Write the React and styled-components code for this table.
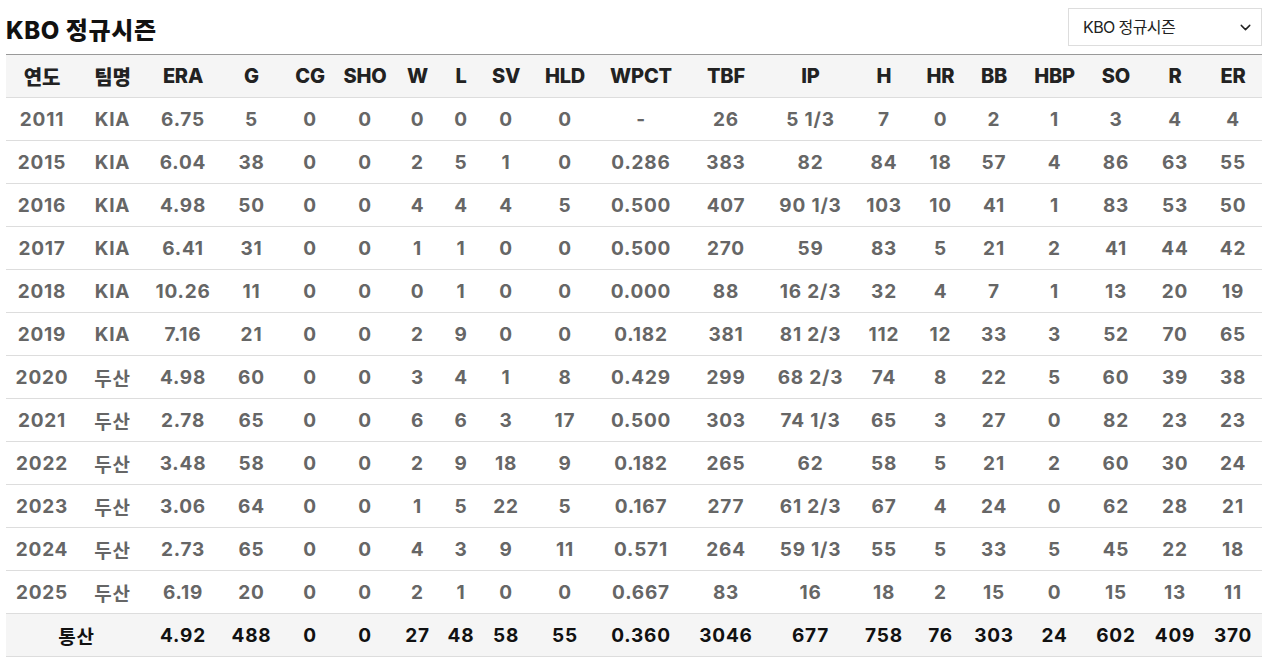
import React from 'react'
import styled, { createGlobalStyle } from 'styled-components'
import { ChevronDown } from 'lucide-react'

const GlobalStyle = createGlobalStyle`
  body {
    margin: 0;
    background: #fff;
    font-family: Inter, "Noto Sans CJK KR", sans-serif;
  }
`

const Page = styled.div`
  padding: 0 7px 0 6px;
`

const Header = styled.div`
  display: flex;
  align-items: center;
  justify-content: space-between;
  height: 54px;
`

const Title = styled.h2`
  margin: 0;
  font-size: 24px;
  font-weight: 800;
  color: #111;
  letter-spacing: 0.6px;
  padding-top: 2px;
`

const SelectWrap = styled.div`
  position: relative;
  width: 194px;
  height: 38px;
  margin-top: -1px;
`

const Select = styled.select`
  appearance: none;
  width: 100%;
  height: 100%;
  border: 1px solid #ddd;
  background: #fff;
  padding: 0 14px;
  font-family: Inter, "Noto Sans CJK KR", sans-serif;
  font-size: 16px;
  color: #222;
  letter-spacing: -0.6px;
  outline: none;
`

const Chevron = styled(ChevronDown)`
  position: absolute;
  right: 8px;
  top: 11px;
  pointer-events: none;
  color: #222;
`

const Table = styled.table`
  width: 100%;
  table-layout: fixed;
  border-collapse: collapse;
  border-top: 1px solid #999;
`

const HeadCell = styled.th`
  height: 42px;
  padding: 0;
  background: #f5f5f5;
  border-bottom: 1px solid #ddd;
  font-size: 20px;
  font-weight: 800;
  color: #222;
  text-align: center;
  letter-spacing: -0.2px;
`

const Cell = styled.td`
  height: 42px;
  padding: 0;
  border-bottom: 1px solid #ddd;
  font-size: 19px;
  font-weight: 700;
  color: ${p => (p.$total ? '#111' : '#666')};
  background: ${p => (p.$total ? '#f5f5f5' : '#fff')};
  text-align: center;
  letter-spacing: 0.8px;
`

const widths = [72, 69, 72, 65, 52, 58, 47, 40, 50, 68, 84, 86, 83, 64, 49, 58, 63, 60, 58, 58]
const heads = ['연도', '팀명', 'ERA', 'G', 'CG', 'SHO', 'W', 'L', 'SV', 'HLD', 'WPCT', 'TBF', 'IP', 'H', 'HR', 'BB', 'HBP', 'SO', 'R', 'ER']

const rows = [
  ['2011', 'KIA', '6.75', '5', '0', '0', '0', '0', '0', '0', '-', '26', '5 1/3', '7', '0', '2', '1', '3', '4', '4'],
  ['2015', 'KIA', '6.04', '38', '0', '0', '2', '5', '1', '0', '0.286', '383', '82', '84', '18', '57', '4', '86', '63', '55'],
  ['2016', 'KIA', '4.98', '50', '0', '0', '4', '4', '4', '5', '0.500', '407', '90 1/3', '103', '10', '41', '1', '83', '53', '50'],
  ['2017', 'KIA', '6.41', '31', '0', '0', '1', '1', '0', '0', '0.500', '270', '59', '83', '5', '21', '2', '41', '44', '42'],
  ['2018', 'KIA', '10.26', '11', '0', '0', '0', '1', '0', '0', '0.000', '88', '16 2/3', '32', '4', '7', '1', '13', '20', '19'],
  ['2019', 'KIA', '7.16', '21', '0', '0', '2', '9', '0', '0', '0.182', '381', '81 2/3', '112', '12', '33', '3', '52', '70', '65'],
  ['2020', '두산', '4.98', '60', '0', '0', '3', '4', '1', '8', '0.429', '299', '68 2/3', '74', '8', '22', '5', '60', '39', '38'],
  ['2021', '두산', '2.78', '65', '0', '0', '6', '6', '3', '17', '0.500', '303', '74 1/3', '65', '3', '27', '0', '82', '23', '23'],
  ['2022', '두산', '3.48', '58', '0', '0', '2', '9', '18', '9', '0.182', '265', '62', '58', '5', '21', '2', '60', '30', '24'],
  ['2023', '두산', '3.06', '64', '0', '0', '1', '5', '22', '5', '0.167', '277', '61 2/3', '67', '4', '24', '0', '62', '28', '21'],
  ['2024', '두산', '2.73', '65', '0', '0', '4', '3', '9', '11', '0.571', '264', '59 1/3', '55', '5', '33', '5', '45', '22', '18'],
  ['2025', '두산', '6.19', '20', '0', '0', '2', '1', '0', '0', '0.667', '83', '16', '18', '2', '15', '0', '15', '13', '11'],
]

const total = ['4.92', '488', '0', '0', '27', '48', '58', '55', '0.360', '3046', '677', '758', '76', '303', '24', '602', '409', '370']

export default function App() {
  return (
    <Page>
      <GlobalStyle />
      <Header>
        <Title>KBO 정규시즌</Title>
        <SelectWrap>
          <Select defaultValue="regular">
            <option value="regular">KBO 정규시즌</option>
            <option value="post">KBO 포스트시즌</option>
          </Select>
          <Chevron size={17} strokeWidth={2} />
        </SelectWrap>
      </Header>
      <Table>
        <colgroup>
          {widths.map((w, i) => <col key={i} style={{ width: w }} />)}
        </colgroup>
        <thead>
          <tr>
            {heads.map(h => <HeadCell key={h}>{h}</HeadCell>)}
          </tr>
        </thead>
        <tbody>
          {rows.map(r => (
            <tr key={r[0]}>
              {r.map((v, i) => <Cell key={i}>{v}</Cell>)}
            </tr>
          ))}
          <tr>
            <Cell $total colSpan={2}>통산</Cell>
            {total.map((v, i) => <Cell $total key={i}>{v}</Cell>)}
          </tr>
        </tbody>
      </Table>
    </Page>
  )
}
